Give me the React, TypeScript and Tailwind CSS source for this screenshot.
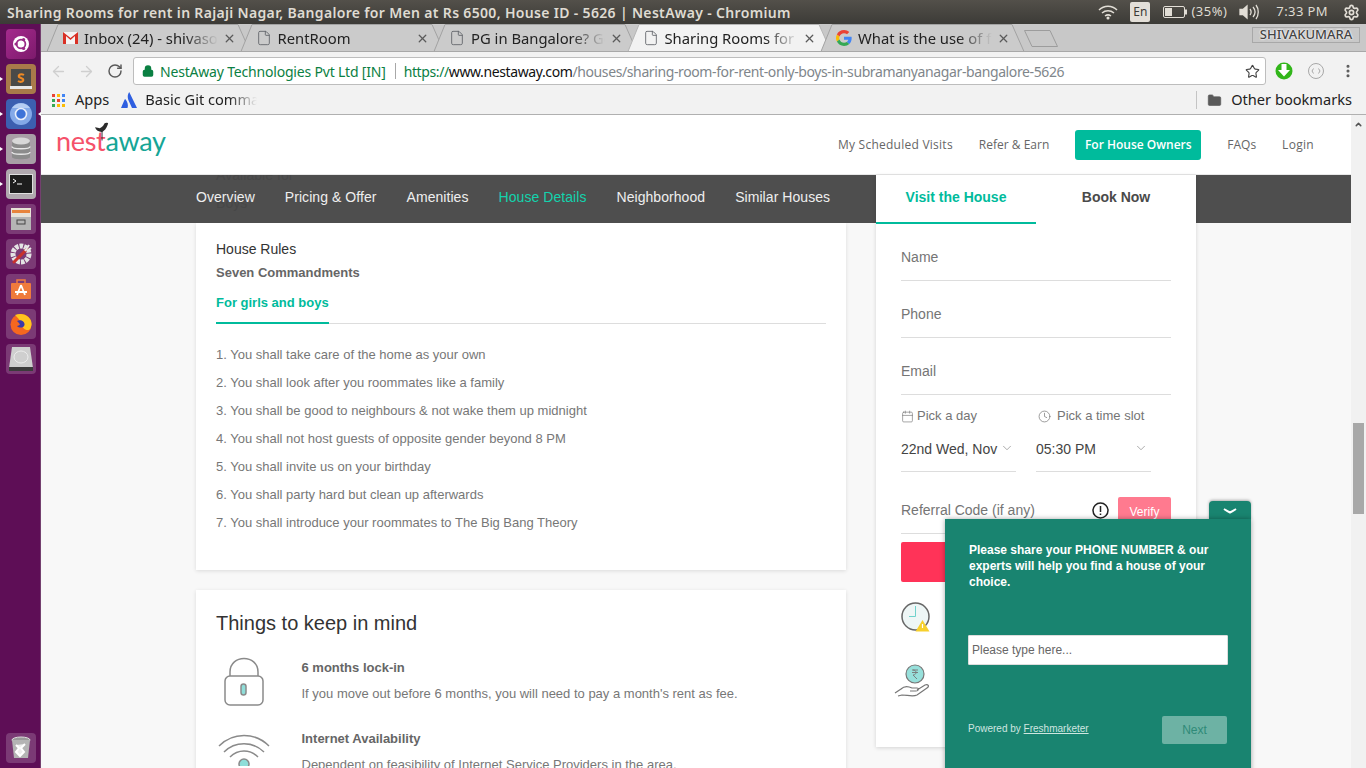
import type React from "react"
import { ArrowLeft, ArrowRight, RotateCw, Lock, Star, X, File, Folder, EllipsisVertical, Calendar, Clock, ChevronDown, ChevronUp, Settings } from "lucide-react"

const ubuntu = "font-['Noto_Sans',sans-serif]"

// Launcher tile
const Tile = ({ children, className = "", pipLeft = false, pipRight = false }: { children: React.ReactNode; className?: string; pipLeft?: boolean; pipRight?: boolean }) => (
    <div className="relative w-[41px] h-[30px] flex justify-center shrink-0">
        {pipLeft && <span className="absolute left-0 top-[13px] border-y-[2.5px] border-l-[3px] border-y-transparent border-l-white" />}
        {pipRight && <span className="absolute right-0 top-[13px] border-y-[2.5px] border-r-[3px] border-y-transparent border-r-white" />}
        <div className={`w-[30px] h-[30px] rounded-[4px] flex items-center justify-center ${className}`}>{children}</div>
    </div>
)

const Launcher = () => (
    <aside className="w-[41px] shrink-0 bg-[#5e0e56] flex flex-col gap-[5px] pt-[5px] pb-[5px] border-r border-[#74406f]">
        <Tile className="bg-gradient-to-br from-[#a52a8d] to-[#7d1a6c]">
            <svg width="20" height="20" viewBox="0 0 20 20">
                <circle cx="10" cy="10" r="8" fill="#fff" />
                <circle cx="10" cy="10" r="4.4" fill="none" stroke="#9a2b86" strokeWidth="1.8" />
                <circle cx="5" cy="10" r="1.6" fill="#9a2b86" />
                <circle cx="12.6" cy="5.6" r="1.6" fill="#9a2b86" />
                <circle cx="12.6" cy="14.4" r="1.6" fill="#9a2b86" />
            </svg>
        </Tile>
        <Tile className="bg-[#a87a4a]" pipLeft>
            <svg width="24" height="24" viewBox="0 0 24 24">
                <rect x="2" y="2" width="20" height="17" fill="#4a4a48" />
                <rect x="1" y="19" width="22" height="3" fill="#e8e8e8" />
                <path d="M15 8 C12 6 9 8 10 10 L14 12 C15.500 14 12 16 9 14" fill="none" stroke="#f08a24" strokeWidth="2" />
            </svg>
        </Tile>
        <Tile className="bg-[#3c5fb0]" pipLeft pipRight>
            <svg width="24" height="24" viewBox="0 0 24 24">
                <circle cx="12" cy="12" r="11" fill="#84a9e8" />
                <path d="M3 6 A11 11 0 0 1 21 6 L12 6 Z" fill="#b6cdf2" />
                <circle cx="12" cy="12" r="5.500" fill="#3d73d8" stroke="#e8eefa" strokeWidth="1.600" />
            </svg>
        </Tile>
        <Tile className="bg-[#a89ea6]" pipLeft>
            <svg width="24" height="26" viewBox="0 0 24 26">
                <path d="M3 5 V21 C3 24 21 24 21 21 V5 Z" fill="#8c8c8c" />
                <ellipse cx="12" cy="5" rx="9" ry="3.500" fill="#d8d8d8" />
                <path d="M3 10.500 C3 13.500 21 13.500 21 10.500 M3 16 C3 19 21 19 21 16" fill="none" stroke="#e8e8e8" strokeWidth="1.500" />
            </svg>
        </Tile>
        <Tile className="bg-[#b0a8ae]" pipLeft>
            <svg width="24" height="20" viewBox="0 0 24 20">
                <rect x="0.500" y="0.500" width="23" height="19" fill="#1d1d1d" stroke="#e0e0e0" />
                <path d="M4 5 L7 7 L4 9" fill="none" stroke="#fff" strokeWidth="1" />
                <path d="M8 10 H13" stroke="#fff" strokeWidth="1" />
            </svg>
        </Tile>
        <Tile className="bg-[#7b3a75]">
            <svg width="22" height="24" viewBox="0 0 22 24">
                <rect x="1" y="1" width="20" height="10" fill="#e8e2d8" />
                <rect x="2" y="3" width="18" height="3" fill="#e8843c" />
                <rect x="1" y="10" width="20" height="13" fill="#b5b5b5" />
                <rect x="7" y="13" width="8" height="4" fill="none" stroke="#444" />
            </svg>
        </Tile>
        <Tile className="bg-[#7b3a75]">
            <svg width="24" height="24" viewBox="0 0 24 24">
                <circle cx="12" cy="12" r="8" fill="none" stroke="#e4e4e4" strokeWidth="5" strokeDasharray="3.500 1" />
                <path d="M5 20 L18 7" stroke="#c8322c" strokeWidth="3" strokeLinecap="round" />
                <path d="M16 9 L20 3 M18 9 L22 6" stroke="#e8e8e8" strokeWidth="2" />
            </svg>
        </Tile>
        <Tile className="bg-[#7b3a75]">
            <svg width="24" height="24" viewBox="0 0 24 24">
                <path d="M8 6 V3 H16 V6" fill="none" stroke="#f07b3f" strokeWidth="1.500" />
                <rect x="2" y="6" width="20" height="16" rx="1" fill="#ef7a3c" />
                <path d="M12 8 L8 18 M12 8 L16 18 M6 15 H18" stroke="#fff" strokeWidth="1.800" />
            </svg>
        </Tile>
        <Tile className="bg-[#7b3a75]">
            <svg width="24" height="24" viewBox="0 0 24 24">
                <circle cx="12" cy="12.500" r="10.500" fill="#f5671f" />
                <path d="M6 3 C16 -1 25 7 22 15 C20 21 14 17 13 14 C17 13 15 9 11 9 C10 7 8 5 6 3 Z" fill="#ffc61e" />
                <path d="M8 9 C11 7 16 9 15.500 13 C15 16 10 16.500 8 14 C9.500 14 10 13 11 12.500 C10 11 9 10 8 9 Z" fill="#3a3aa8" />
            </svg>
        </Tile>
        <Tile className="bg-[#7b3a75]">
            <svg width="26" height="26" viewBox="0 0 26 26">
                <path d="M4 1 H22 L25 22 H1 Z" fill="#cfcfcf" />
                <rect x="1" y="21" width="24" height="4" fill="#3c3c3c" />
                <ellipse cx="13" cy="11" rx="7" ry="6" fill="none" stroke="#ececec" />
            </svg>
        </Tile>
        <div className="mt-auto">
            <Tile className="bg-[#7b3a75]">
                <svg width="22" height="24" viewBox="0 0 22 24">
                    <ellipse cx="11" cy="4" rx="9" ry="3" fill="#9a9a9a" stroke="#ddd" />
                    <path d="M2 4 L4 22 H18 L20 4 Z" fill="#b4b4b4" />
                    <path d="M6 9 L9 12 L6 16 L10 20 L14 16 L11 12 L15 8" fill="#eee" stroke="#fff" strokeWidth="2" />
                </svg>
            </Tile>
        </div>
    </aside>
)

// Ubuntu top panel
const TopPanel = () => (
    <div className={`h-6 shrink-0 flex items-center pl-[7px] pr-[6px] bg-gradient-to-b from-[#53504a] to-[#3c3b37] text-[#dfdbd2] ${ubuntu}`}>
        <span className="text-[14px] font-semibold tracking-[0.33px] whitespace-nowrap">
            Sharing Rooms for rent in Rajaji Nagar, Bangalore for Men at Rs 6500, House ID - 5626 | NestAway - Chromium
        </span>
        <svg className="ml-auto" width="20" height="16" viewBox="0 0 20 16" fill="none" stroke="#e2ded6" strokeWidth="1.500">
            <path d="M1 6 C6 1 14 1 19 6 M4 9 C7.500 6 12.500 6 16 9 M7 12 C9 10.500 11 10.500 13 12" />
            <circle cx="10" cy="14" r="0.800" fill="#e2ded6" />
        </svg>
        <span className="ml-[12px] w-[20px] h-[20px] rounded-[2px] bg-[#e3dfd8] text-[#3c3b37] text-[12px] flex items-center justify-center">En</span>
        <svg className="ml-[13px]" width="24" height="12" viewBox="0 0 24 12">
            <rect x="0.500" y="0.500" width="21" height="11" rx="1.500" fill="none" stroke="#e2ded6" />
            <rect x="2" y="2" width="7" height="8" fill="#e2ded6" />
            <rect x="22" y="3.500" width="2" height="5" fill="#e2ded6" />
        </svg>
        <span className="ml-[4px] text-[13px] tracking-[0.5px]">(35%)</span>
        <svg className="ml-[12px]" width="20" height="16" viewBox="0 0 20 16" fill="none" stroke="#e2ded6" strokeWidth="1.300">
            <path d="M1 5.500 H4 L8 2 V14 L4 10.500 H1 Z" fill="#e2ded6" />
            <path d="M11 5 C12.500 7 12.500 9 11 11 M14 3 C16.500 6 16.500 10 14 13 M17 1 C20 5 20 11 17 15" />
        </svg>
        <span className="ml-[17px] text-[13px] tracking-[0.4px]">7:33 PM</span>
        <span className="relative ml-[15px] w-[17px] h-[17px] flex items-center justify-center">
            <Settings size={17} strokeWidth={2.4} className="text-[#e2ded6]" />
        </span>
    </div>
)

// Browser tab outline drawn behind the tab contents
const Tab = ({ title, icon, active = false }: { title: string; icon: React.ReactNode; active?: boolean }) => (
    <div className="relative w-[193.500px] h-[28px] shrink-0 flex items-center pl-[15px] pr-[5px]">
        <svg className="absolute left-0 top-0 overflow-visible" width="194" height="28" viewBox="0 0 194 28">
            <path d="M0 27.500 L11 0.500 H191 L203 27.500" fill={active ? "#f2f2f2" : "#cbcbcb"} stroke={active ? "#b5b5b5" : "#a2a2a2"} />
        </svg>
        <span className="relative w-[16px] h-[16px] flex items-center justify-center shrink-0">{icon}</span>
        <span className="relative ml-[6px] w-[134px] overflow-hidden whitespace-nowrap text-[14.8px] text-[#222] [mask-image:linear-gradient(to_right,black_75%,transparent)]">{title}</span>
        <X size={13} strokeWidth={2.4} className="relative ml-auto text-[#5a5a5a]" />
    </div>
)

const PageIcon = () => <File size={16} strokeWidth={1.300} className="text-[#5f6368]" />

const TabStrip = () => (
    <div className={`relative h-[28px] shrink-0 bg-[#c8c8c8] flex pl-[6px] border-b border-[#a8a8a8] overflow-hidden ${ubuntu}`}>
        <Tab
            title="Inbox (24) - shivasomething"
            icon={
                <svg width="15" height="12" viewBox="0 0 15 12">
                    <rect x="0" y="0" width="15" height="12" fill="#f4f4f4" />
                    <path d="M0 0 V12 H3 V4 L7.500 8 L12 4 V12 H15 V0 L7.500 6 Z" fill="#d93025" />
                </svg>
            }
        />
        <Tab title="RentRoom" icon={<PageIcon />} />
        <Tab title="PG in Bangalore? Get the best" icon={<PageIcon />} />
        <Tab title="Sharing Rooms for rent in" active icon={<PageIcon />} />
        <Tab
            title="What is the use of final"
            icon={
                <svg width="16" height="16" viewBox="0 0 48 48">
                    <path fill="#EA4335" d="M24 9.500c3.500 0 6.700 1.300 9.100 3.500l6.800-6.800C35.800 2.400 30.200 0 24 0 14.600 0 6.500 5.400 2.600 13.200l7.900 6.100C12.400 13.700 17.700 9.500 24 9.500z" />
                    <path fill="#4285F4" d="M47 24.500c0-1.600-.1-3.100-.4-4.500H24v9h12.900c-.6 3-2.200 5.500-4.700 7.200l7.600 5.900C44.300 37.900 47 31.800 47 24.500z" />
                    <path fill="#FBBC05" d="M10.500 28.700c-.5-1.400-.8-3-.8-4.700s.3-3.300.8-4.700l-7.900-6.100C.9 16.400 0 20.100 0 24s.9 7.600 2.600 10.800l7.900-6.100z" />
                    <path fill="#34A853" d="M24 48c6.500 0 11.900-2.100 15.900-5.800l-7.600-5.900c-2.100 1.400-4.900 2.300-8.200 2.300-6.300 0-11.600-4.200-13.500-10l-7.900 6.100C6.500 42.600 14.600 48 24 48z" />
                </svg>
            }
        />
        <svg className="ml-[9px] mt-[6px] shrink-0" width="34" height="18" viewBox="0 0 34 18">
            <path d="M0.500 0.500 H26 L33.500 16.500 H8 Z" fill="#c8c8c8" stroke="#9c9c9c" />
        </svg>
        <div className="absolute right-[6px] top-[3px] w-[108px] h-[16px] border border-[#a8a8a8] flex items-center justify-center text-[13px] font-medium text-[#444] [text-shadow:0_0_2px_#fff,0_0_2px_#fff]">SHIVAKUMARA</div>
    </div>
)

const Toolbar = () => (
    <div className={`h-[34px] shrink-0 bg-[#f2f2f2] flex items-center pl-[9px] pr-[9px] pt-[4px] ${ubuntu}`}>
        <ArrowLeft size={17} strokeWidth={1.800} className="text-[#cfcfcf]" />
        <ArrowRight size={17} strokeWidth={1.800} className="ml-[11px] text-[#cfcfcf]" />
        <RotateCw size={16} strokeWidth={2.200} className="ml-[12px] text-[#5a5a5a]" />
        <div className="ml-[10px] w-[1133px] h-[28px] rounded-[3px] bg-white border border-[#bdbdbd] flex items-center pl-[8px] pr-[5px] text-[14px] whitespace-nowrap">
            <Lock size={12} strokeWidth={3} className="text-[#0b8043] fill-[#0b8043]" />
            <span className="ml-[6px] text-[#0b8043] tracking-[-0.19px]">NestAway Technologies Pvt Ltd [IN]</span>
            <span className="ml-[9px] mr-[8px] w-px h-[16px] bg-[#a8a8a8]" />
            <span className="tracking-[-0.39px] text-[#0b8043]">https://</span>
            <span className="tracking-[-0.39px] text-[#111]">www.nestaway.com</span>
            <span className="tracking-[-0.39px] text-[#80868b]">/houses/sharing-room-for-rent-only-boys-in-subramanyanagar-bangalore-5626</span>
            <Star size={15} strokeWidth={1.800} className="ml-auto text-[#444]" />
        </div>
        <svg className="ml-[9px]" width="18" height="18" viewBox="0 0 18 18">
            <circle cx="9" cy="9" r="8.500" fill="#32b61a" />
            <path d="M6.500 2 H11.500 V8 H15 L9 14.500 L3 8 H6.500 Z" fill="#fff" />
        </svg>
        <svg className="ml-[14px]" width="18" height="18" viewBox="0 0 18 18" fill="none" stroke="#a8a8a8">
            <circle cx="9" cy="9" r="7.500" />
            <path d="M6.500 6.500 L5 9 L6.500 11.500 M11.500 6.500 L13 9 L11.500 11.500" />
        </svg>
        <EllipsisVertical size={16} strokeWidth={2.600} className="ml-[15px] text-[#5a5a5a]" />
    </div>
)

const Bookmarks = () => (
    <div className={`h-[29px] shrink-0 bg-[#f2f2f2] border-b border-[#b0b0b0] flex items-center pl-[11px] pr-[14px] text-[14.6px] text-[#222] ${ubuntu}`}>
        <div className="w-[13px] h-[13px] grid grid-cols-3 gap-[2px]">
            <i className="bg-[#ea4335]" /><i className="bg-[#fbbc05]" /><i className="bg-[#4285f4]" />
            <i className="bg-[#34a853]" /><i className="bg-[#ea4335]" /><i className="bg-[#4285f4]" />
            <i className="bg-[#34a853]" /><i className="bg-[#fbbc05]" /><i className="bg-[#fbbc05]" />
        </div>
        <span className="ml-[10px]">Apps</span>
        <svg className="ml-[12px]" width="16" height="16" viewBox="0 0 16 16">
            <path d="M8.200 0 C6 3.500 6.500 6.500 8.500 10.500 L11 16 H16 Z" fill="#2f5fe0" />
            <path d="M4.700 7.500 C4.300 7 3.800 7 3.500 7.700 L0 16 H6.500 C7.500 13 6.500 9.800 4.700 7.500 Z" fill="#2f5fe0" />
        </svg>
        <span className="ml-[8px] w-[112px] overflow-hidden whitespace-nowrap [mask-image:linear-gradient(to_right,black_75%,transparent)]">Basic Git commands</span>
        <span className="ml-auto w-px h-[18px] bg-[#c4c4c4]" />
        <Folder size={15} strokeWidth={1} className="ml-[10px] text-[#5a5a5a] fill-[#5a5a5a]" />
        <span className="ml-[9px]">Other bookmarks</span>
    </div>
)

const Logo = () => (
    <div className="relative mb-[8px] flex items-baseline font-['Lato',sans-serif] font-normal text-[27px] leading-none tracking-[-0.3px]">
        <span className="text-[#f5516a]">nest</span>
        <span className="text-[#16a596]">away</span>
        <svg className="absolute left-[39px] top-[-5px]" width="15" height="20" viewBox="0 0 16 20">
            <path d="M0 5 C2 5 4 6 5 6 C7 5 9 4 10 1 C11 0 14 0 14 1 C13 4 12 7 9 9 L8 10 V19 H7 V10 C4 10 1 8 0 5 Z" fill="#2b2b2b" />
        </svg>
    </div>
)

const Header = () => (
    <header className="h-[60px] shrink-0 bg-white border-b border-[#e8e8e8] flex items-center pl-[15px] pr-[37px] font-['Open_Sans',sans-serif] text-[12px] text-[#666]">
        <Logo />
        <a className="ml-auto tracking-[0.25px]">My Scheduled Visits</a>
        <a className="ml-[26px]">Refer &amp; Earn</a>
        <a className="ml-[26px] w-[126px] h-[30px] rounded-[3px] bg-[#00bb9c] text-white font-semibold flex items-center justify-center">For House Owners</a>
        <a className="ml-[26px]">FAQs</a>
        <a className="ml-[26px] tracking-[0.3px]">Login</a>
    </header>
)

const navItems = ["Overview", "Pricing & Offer", "Amenities", "House Details", "Neighborhood", "Similar Houses"]

const NavBar = () => (
    <nav className="relative h-[48px] shrink-0 bg-[#4e4e4e] pl-[155px] pb-[4px] flex items-center gap-[30px] font-['Liberation_Sans',sans-serif] text-[14px] tracking-[0.06px] text-[#eee] overflow-hidden">
        {/* page content showing through the translucent bar */}
        <span className="absolute left-[175px] top-[-10px] text-[#474747]">Available for</span>
        <span className="absolute left-[175px] top-[18px] text-[#474747]">Boys</span>
        {navItems.map((item) => (
            <a key={item} className={`relative ${item === "House Details" ? "text-[#13d3ad]" : ""}`}>
                {item}
            </a>
        ))}
    </nav>
)

const rules = [
    "1. You shall take care of the home as your own",
    "2. You shall look after you roommates like a family",
    "3. You shall be good to neighbours & not wake them up midnight",
    "4. You shall not host guests of opposite gender beyond 8 PM",
    "5. You shall invite us on your birthday",
    "6. You shall party hard but clean up afterwards",
    "7. You shall introduce your roommates to The Big Bang Theory",
]

const LockIcon = () => (
    <svg width="40" height="50" viewBox="0 0 40 50" fill="none" stroke="#8a8a8a" strokeWidth="1.500">
        <path d="M6 19 V15 C6 -3 34 -3 34 15 V19" />
        <rect x="1" y="19" width="38" height="29" rx="5" />
        <rect x="17" y="27" width="5" height="11" rx="2.500" fill="#8fded9" />
    </svg>
)

const WifiIcon = () => (
    <svg width="52" height="32" viewBox="0 0 52 32" fill="none" stroke="#8a8a8a" strokeWidth="1.500">
        <path d="M1 12 C15 -2 37 -2 51 12 M6 18 C17 7 35 7 46 18 M12 23 C20 15 32 15 40 23" />
        <circle cx="26" cy="30" r="5" fill="#8fded9" />
    </svg>
)

const MainColumn = () => (
    <div className="w-[650px] shrink-0 flex flex-col gap-5 font-['Liberation_Sans',sans-serif]">
        <section className="h-[347px] bg-white shadow-[0_1px_4px_rgba(0,0,0,0.12)] px-5 pt-[17px]">
            <h3 className="text-[14px] leading-[18px] text-[#333]">House Rules</h3>
            <p className="mt-[7px] text-[13px] leading-[15px] font-bold text-[#666]">Seven Commandments</p>
            <div className="mt-[15px] border-b border-[#ddd] flex">
                <span className="h-[29px] text-[13px] leading-[16px] font-bold text-[#00bb9c] border-b-2 border-[#00bb9c] -mb-px">For girls and boys</span>
            </div>
            <ul className="mt-[17px] flex flex-col text-[13px] leading-[28px] text-[#777]">
                {rules.map((rule) => (
                    <li key={rule}>{rule}</li>
                ))}
            </ul>
        </section>
        <section className="bg-white shadow-[0_1px_4px_rgba(0,0,0,0.12)] px-5 pt-[21px] h-[300px]">
            <h2 className="text-[20px] leading-[24px] text-[#333]">Things to keep in mind</h2>
            <div className="mt-[13px] flex">
                <div className="w-[85.500px] pl-[8px] pt-[9px] shrink-0">
                    <LockIcon />
                </div>
                <div className="pt-[12px]">
                    <p className="text-[13px] leading-[15px] font-bold text-[#666]">6 months lock-in</p>
                    <p className="mt-[11px] text-[13px] leading-[15px] text-[#777]">If you move out before 6 months, you will need to pay a month's rent as fee.</p>
                </div>
            </div>
            <div className="mt-[24px] flex">
                <div className="w-[85.500px] pl-[2px] pt-[3px] shrink-0">
                    <WifiIcon />
                </div>
                <div>
                    <p className="text-[13px] leading-[15px] font-bold text-[#666]">Internet Availability</p>
                    <p className="mt-[11px] text-[13px] leading-[15px] text-[#777]">Dependent on feasibility of Internet Service Providers in the area.</p>
                </div>
            </div>
        </section>
    </div>
)

const Field = ({ label }: { label: string }) => (
    <div className="h-[57px] border-b border-[#ddd] pt-[25px] text-[14px] leading-[16px] text-[#757575]">{label}</div>
)

const PanelClock = () => (
    <svg width="30" height="30" viewBox="0 0 30 30">
        <circle cx="14.500" cy="14.500" r="13.500" fill="#eef6f6" stroke="#666" strokeWidth="1.500" />
        <path d="M14.500 4 V14.500 H8" stroke="#6fd2cc" strokeWidth="1" fill="none" />
        <path d="M21.500 18 L28.500 29.500 H14.500 Z" fill="#f7d02c" />
        <path d="M21.500 22 V26" stroke="#fff" strokeWidth="1.200" />
    </svg>
)

const PanelHand = () => (
    <svg width="36" height="33" viewBox="0 0 36 33" fill="none" stroke="#777" strokeWidth="1.200">
        <circle cx="21" cy="10" r="9" fill="#97e0db" />
        <path d="M18 6 H24 M18 8.500 H24 M19 6 C23 6 23 11 19 11 L23 15" strokeWidth="0.900" />
        <path d="M1 29 L7 25 C10 22 14 22 18 24 H23 C25 24 25 27 22 27 H16 M23 26 L31 21 C34 20 36 22 33 24 L23 31 C19 33 13 31 8 31 L4 32" />
    </svg>
)

const BookingPanel = () => (
    <aside className="relative w-[320px] h-[572px] shrink-0 bg-white shadow-[0_1px_4px_rgba(0,0,0,0.15)] font-['Liberation_Sans',sans-serif]">
        <div className="flex h-[49px] text-[14px] font-bold">
            <div className="w-[160px] flex items-center justify-center border-b-2 border-[#00bb9c] text-[#00bb9c] pb-[3px]">Visit the House</div>
            <div className="w-[160px] flex items-center justify-center text-[#4a4a4a] pb-[5px]">Book Now</div>
        </div>
        <div className="px-[25px]">
            <Field label="Name" />
            <Field label="Phone" />
            <Field label="Email" />
            <div className="flex gap-[20px] pt-[13px] text-[#757575] text-[13px]">
                <div className="w-[115px]">
                    <div className="flex items-center gap-[3px] h-[16px]">
                        <Calendar size={13} strokeWidth={1.200} />
                        <span>Pick a day</span>
                    </div>
                    <div className="mt-[10px] h-[38px] border-b border-[#ddd] flex items-start pt-[5px] pr-[2px] text-[14px] text-[#444]">
                        22nd Wed, Nov
                        <ChevronDown size={14} strokeWidth={1.200} className="ml-auto mt-[2px] text-[#888]" />
                    </div>
                </div>
                <div className="w-[115px]">
                    <div className="flex items-center gap-[6px] h-[16px] pl-[2px]">
                        <Clock size={13} strokeWidth={1.300} />
                        <span>Pick a time slot</span>
                    </div>
                    <div className="mt-[10px] h-[38px] border-b border-[#ddd] flex items-start pt-[5px] pr-[3px] text-[14px] text-[#444]">
                        05:30 PM
                        <ChevronDown size={14} strokeWidth={1.200} className="ml-auto mt-[2px] text-[#888]" />
                    </div>
                </div>
            </div>
            <div className="mt-[25px] h-[37px] border-b border-[#ddd] flex items-start text-[14px] text-[#757575]">
                <span className="mt-[3px]">Referral Code (if any)</span>
                <svg className="ml-auto mt-[5px]" width="17" height="17" viewBox="0 0 17 17" fill="none" stroke="#222" strokeWidth="1.500">
                    <circle cx="8.500" cy="8.500" r="7.500" />
                    <path d="M8.500 4 V10 M8.500 11.500 V13" />
                </svg>
                <span className="ml-[9px] w-[53px] h-[33px] rounded-[2px] bg-[#ff7a8f] text-white text-[12px] flex items-start pt-[6px] justify-center">Verify</span>
            </div>
            <div className="mt-[8px] w-[270px] h-[40px] rounded-[2px] bg-[#ff3358]" />
            <div className="mt-[20px]">
                <PanelClock />
            </div>
            <div className="mt-[32px] -ml-[7px]">
                <PanelHand />
            </div>
        </div>
    </aside>
)

const ChatWidget = () => (
    <div className="absolute left-[904px] top-[404px] w-[306px] h-[270px] font-['Liberation_Sans',sans-serif]">
        <div className="absolute right-0 top-[-18px] w-[42px] h-[19px] rounded-t-[4px] bg-[#198470] shadow-[0_-1px_3px_rgba(0,0,0,0.3)] flex items-center justify-center">
            <svg width="14" height="6" viewBox="0 0 14 6" fill="none" stroke="#fff" strokeWidth="2">
                <path d="M1 1 C4 3 6 4 7 4.500 C8 4 10 3 13 1" />
            </svg>
        </div>
        <div className="relative h-full bg-[#198470] shadow-[0_0_5px_rgba(0,0,0,0.35)] px-[23px] pt-[23px]">
            <p className="pl-px text-[12px] leading-[16px] font-bold text-white w-[251px]">Please share your PHONE NUMBER &amp; our experts will help you find a house of your choice.</p>
            <div className="mt-[45px] w-[260px] h-[30px] bg-white border border-[#ddd] rounded-[1px] pl-[3px] flex items-center text-[12px] text-[#666]">Please type here...</div>
            <div className="mt-[51px] flex w-[259px]">
                <span className="self-start mt-[5px] text-[10px] text-[#cfe6e0]">
                    Powered by <span className="underline">Freshmarketer</span>
                </span>
                <span className="ml-auto w-[65px] h-[28px] rounded-[2px] bg-[#6db2a4] text-[#2f8a78] text-[12px] flex items-center justify-center">Next</span>
            </div>
        </div>
    </div>
)

const Scrollbar = () => (
    <div className="w-[15px] shrink-0 bg-[#f1f1f1] flex flex-col items-center pt-[5px]">
        <ChevronUp size={9} strokeWidth={4} className="text-[#555]" />
        <div className="mt-[294px] w-[11px] h-[91px] bg-[#a8a8a8]" />
    </div>
)

export default function App() {
    return (
        <div className="w-[1366px] h-[768px] overflow-hidden flex flex-col bg-[#5e0e56]">
            <TopPanel />
            <div className="flex-1 min-h-0 flex">
                <Launcher />
                <div className="flex-1 min-w-0 flex flex-col">
                    <TabStrip />
                    <Toolbar />
                    <Bookmarks />
                    <div className="relative flex-1 min-h-0 flex overflow-hidden bg-[#f8f8f8]">
                        <div className="flex-1 min-w-0 flex flex-col">
                            <Header />
                            <NavBar />
                            <div className="-mt-[48px] pl-[155px] flex gap-[30px] items-start">
                                <div className="pt-[48px]">
                                    <MainColumn />
                                </div>
                                <BookingPanel />
                            </div>
                        </div>
                        <Scrollbar />
                        <ChatWidget />
                    </div>
                </div>
            </div>
        </div>
    )
}
